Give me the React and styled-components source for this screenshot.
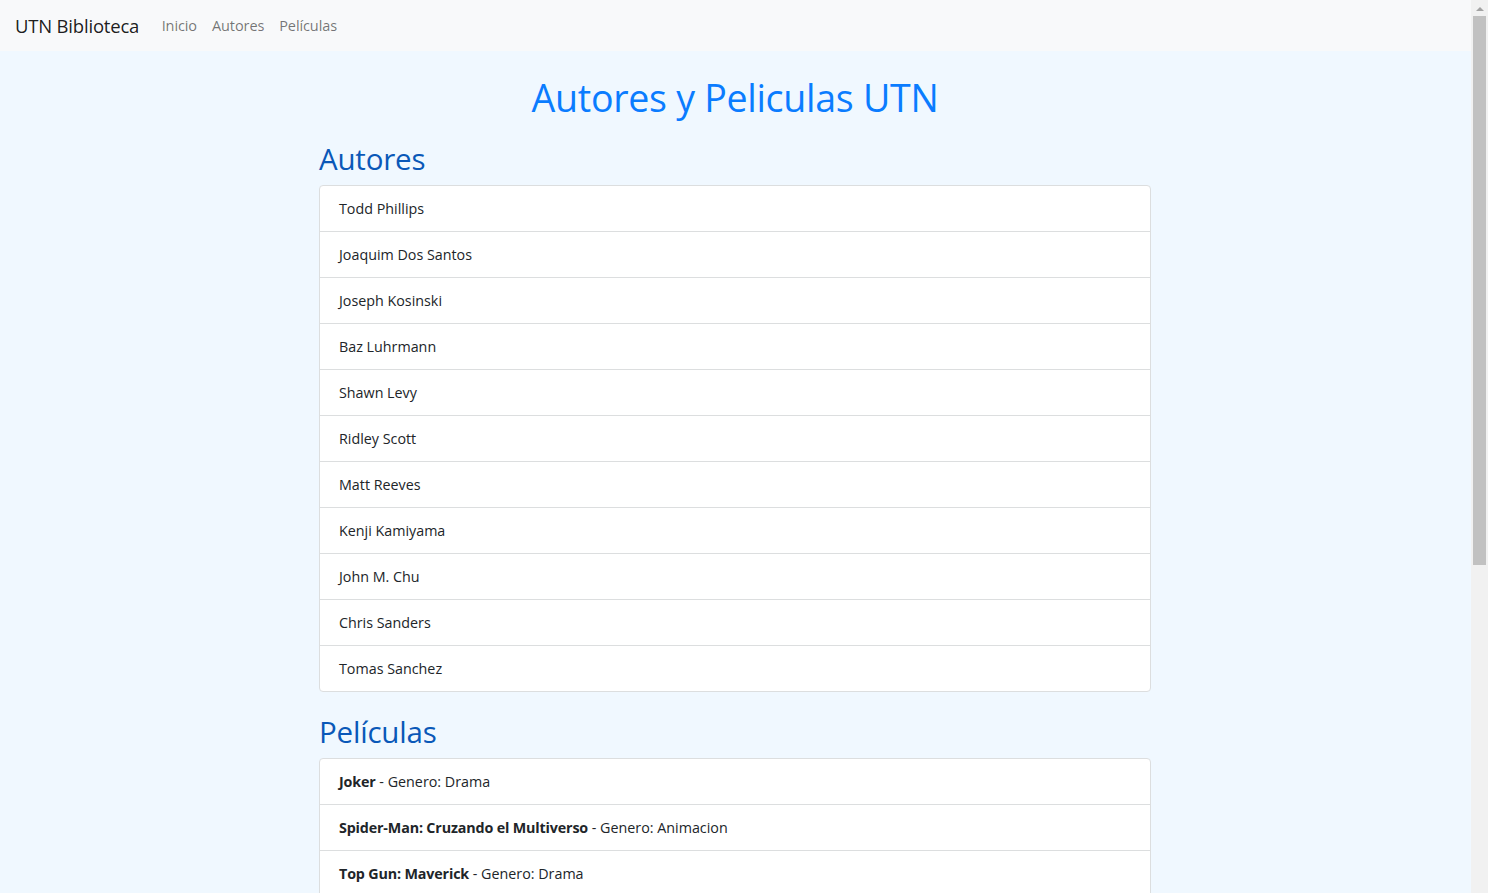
import React from "react";
import styled, { createGlobalStyle } from "styled-components";

const GlobalStyle = createGlobalStyle`
  html, body { margin: 0; background: #f0f8ff; }
  body {
    font-family: "Open Sans", "Noto Sans", sans-serif;
    color: #212529;
    overflow: hidden;
  }
`;

const Frame = styled.div`
  display: flex;
  height: 100vh;
  overflow: hidden;
`;

const Page = styled.div`
  flex: 1;
  min-width: 0;
  overflow: hidden;
`;

const Scrollbar = styled.div`
  width: 17px;
  flex: none;
  background: #f1f1f1;
  display: flex;
  flex-direction: column;
  align-items: center;
`;

const ArrowButton = styled.div`
  height: 16px;
  width: 17px;
  display: flex;
  align-items: center;
  justify-content: center;
`;

const Thumb = styled.div`
  width: 13px;
  height: 549px;
  background: #c1c1c1;
`;

const Navbar = styled.nav`
  display: flex;
  align-items: center;
  height: 51px;
  padding: 0 15px;
  background: #f8f9fa;
  box-sizing: border-box;
`;

const Brand = styled.a`
  font-size: 18.5px;
  color: rgba(0, 0, 0, 0.9);
  text-decoration: none;
  margin-right: 15px;
  letter-spacing: -0.2px;
`;

const NavLinks = styled.div`
  display: flex;
  align-items: center;
`;

const NavLink = styled.a`
  font-size: 14.5px;
  color: rgba(0, 0, 0, 0.55);
  text-decoration: none;
  padding: 0 7.5px;
  letter-spacing: -0.1px;
`;

const Main = styled.main`
  box-sizing: border-box;
  width: 833px;
  margin: 0 auto;
  padding: 23px 1px 40px 0;
`;

const Title = styled.h1`
  margin: 0 0 15px;
  text-align: center;
  font-size: 37.6px;
  font-weight: 400;
  line-height: 48px;
  color: #0a7cff;
  letter-spacing: -0.3px;
`;

const SectionTitle = styled.h2`
  margin: 0 0 8px;
  padding-top: 4px;
  font-size: 29.5px;
  font-weight: 400;
  line-height: 36px;
  color: #0a58b8;
  letter-spacing: -0.2px;
`;

const List = styled.ul`
  list-style: none;
  margin: 0 0 ${(p) => p.$mb || 0}px;
  padding: 0;
  background: #fff;
  border: 1px solid #dcdedf;
  border-radius: 4px;
  overflow: hidden;
`;

const Item = styled.li`
  padding: 12px 19px;
  font-size: 14.3px;
  line-height: 21px;
  border-top: 1px solid #dcdedf;
  &:first-child { border-top: none; }
`;

const Strong = styled.strong`
  font-weight: 700;
  letter-spacing: -0.15px;
`;

const autores = [
  "Todd Phillips",
  "Joaquim Dos Santos",
  "Joseph Kosinski",
  "Baz Luhrmann",
  "Shawn Levy",
  "Ridley Scott",
  "Matt Reeves",
  "Kenji Kamiyama",
  "John M. Chu",
  "Chris Sanders",
  "Tomas Sanchez",
];

const peliculas = [
  ["Joker", "Drama"],
  ["Spider-Man: Cruzando el Multiverso", "Animacion"],
  ["Top Gun: Maverick", "Drama"],
  ["Elvis", "Drama"],
  ["Free Guy", "Comedia"],
  ["Gladiador II", "Accion"],
  ["The Batman", "Accion"],
  ["La Guerra de los Rohirrim", "Animacion"],
  ["Wicked", "Musical"],
  ["Robot Salvaje", "Animacion"],
  ["El Proyecto Adam", "Ciencia Ficcion"],
  ["Napoleon", "Drama"],
  ["En las Alturas", "Musical"],
];

export default function App() {
  return (
    <>
      <GlobalStyle />
      <Frame>
        <Page>
          <Navbar>
            <Brand href="#">UTN Biblioteca</Brand>
            <NavLinks>
              <NavLink href="#">Inicio</NavLink>
              <NavLink href="#">Autores</NavLink>
              <NavLink href="#">Películas</NavLink>
            </NavLinks>
          </Navbar>
          <Main>
            <Title>Autores y Peliculas UTN</Title>
            <SectionTitle>Autores</SectionTitle>
            <List $mb={18}>
              {autores.map((a) => (
                <Item key={a}>{a}</Item>
              ))}
            </List>
            <SectionTitle>Películas</SectionTitle>
            <List>
              {peliculas.map(([t, g]) => (
                <Item key={t}>
                  <Strong>{t}</Strong> - Genero: {g}
                </Item>
              ))}
            </List>
          </Main>
        </Page>
        <Scrollbar>
          <ArrowButton>
            <svg width="8" height="5" viewBox="0 0 8 5">
              <path d="M0 5 L4 1 L8 5 Z" fill="#a3a3a3" />
            </svg>
          </ArrowButton>
          <Thumb />
        </Scrollbar>
      </Frame>
    </>
  );
}
